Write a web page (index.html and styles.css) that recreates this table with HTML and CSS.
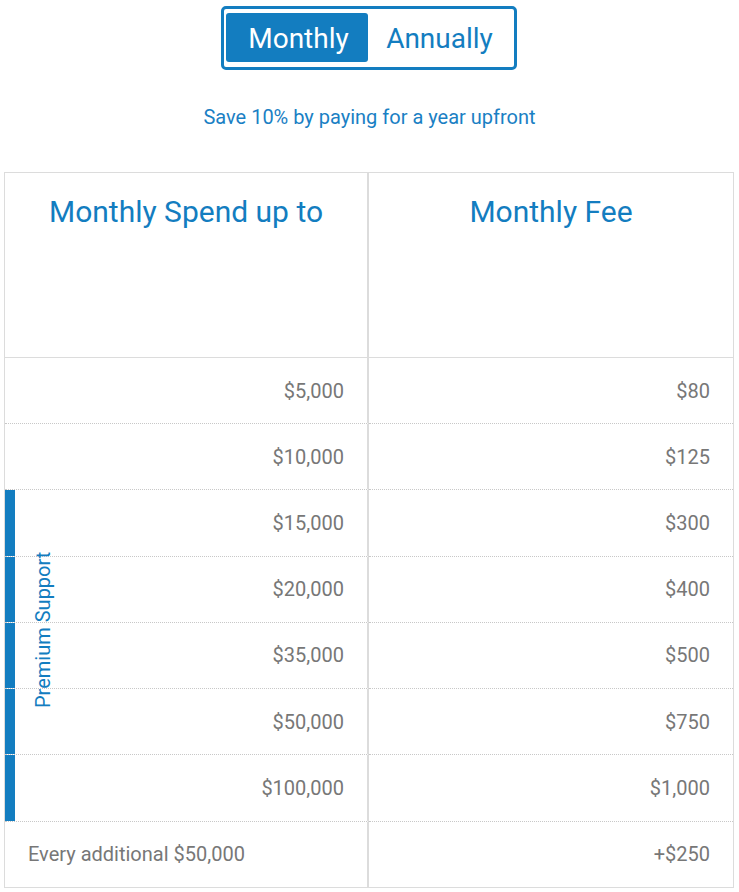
FILE: index.html
```html
<!DOCTYPE html>
<html>
<head>
<meta charset="utf-8">
<link rel="stylesheet" href="styles.css">
</head>
<body>
<div class="page">
  <div class="toggle-wrap">
    <div class="toggle">
      <span class="opt active">Monthly</span>
      <span class="opt">Annually</span>
    </div>
  </div>
  <p class="save">Save 10% by paying for a year upfront</p>
  <div class="table">
    <div class="cell head left">Monthly Spend up to</div>
    <div class="cell head">Monthly Fee</div>

    <div class="cell left num first">$5,000</div>
    <div class="cell num first">$80</div>

    <div class="cell left num dot">$10,000</div>
    <div class="cell num dot">$125</div>

    <div class="cell left num dot prem">$15,000</div>
    <div class="cell num dot">$300</div>

    <div class="cell left num dot prem">$20,000</div>
    <div class="cell num dot">$400</div>

    <div class="cell left num dot prem">$35,000</div>
    <div class="cell num dot">$500</div>

    <div class="cell left num dot prem">$50,000</div>
    <div class="cell num dot">$750</div>

    <div class="cell left num dot prem">$100,000</div>
    <div class="cell num dot">$1,000</div>

    <div class="cell left dot extra">Every additional $50,000</div>
    <div class="cell num dot">+$250</div>

    <div class="premium-label">Premium Support</div>
  </div>
</div>
</body>
</html>
```

FILE: styles.css
```css
* { box-sizing: border-box; }
html, body { margin: 0; padding: 0; background: #fff; }
body { font-family: Roboto, "Open Sans", Arial, sans-serif; }

.page { width: 739px; padding-top: 6px; }

.toggle-wrap { display: flex; justify-content: center; }
.toggle {
  display: flex;
  border: 3px solid #137dc0;
  border-radius: 5px;
  padding: 4px 2px 5px 2px;
  width: 296px;
  margin-left: -2px;
}
.opt {
  height: 49px;
  display: flex;
  align-items: center;
  justify-content: center;
  padding: 2px 16px 0 16px;
  font-size: 28px;
  color: #137dc0;
  border-radius: 3px;
  flex: 1;
}
.opt.active { background: #137dc0; color: #fff; flex: 0 0 142px; padding-left: 20px; padding-right: 16px; }

.save {
  margin: 35px 0 0 0;
  text-align: center;
  color: #1a80c4;
  font-size: 20px;
  line-height: 24px;
}

.table {
  position: relative;
  margin: 43px 0 0 4px;
  width: 730px;
  display: grid;
  grid-template-columns: 364px 1fr;
  border: 1px solid #dcdcdc;
}
.cell {
  height: 66.25px;
  color: #777;
  font-size: 20px;
  display: flex;
  align-items: center;
}
.cell.first { height: 65px; }
.cell.left { border-right: 2px solid #dcdcdc; }
.cell.num { justify-content: flex-end; padding-right: 23px; }
.cell.dot { border-top: 1px dotted #c8c8c8; }
.cell.head {
  height: 185px;
  align-items: flex-start;
  justify-content: center;
  padding-top: 21px;
  font-size: 30px;
  color: #137dc0;
  border-bottom: 1px solid #dcdcdc;
}
.cell.prem { box-shadow: inset 10px 0 0 #137dc0; }
.cell.extra { padding-left: 23px; }

.premium-label {
  position: absolute;
  left: 28px;
  top: 535px;
  transform: rotate(-90deg);
  transform-origin: left top;
  font-size: 20px;
  color: #137dc0;
  white-space: nowrap;
  line-height: 20px;
}
```
